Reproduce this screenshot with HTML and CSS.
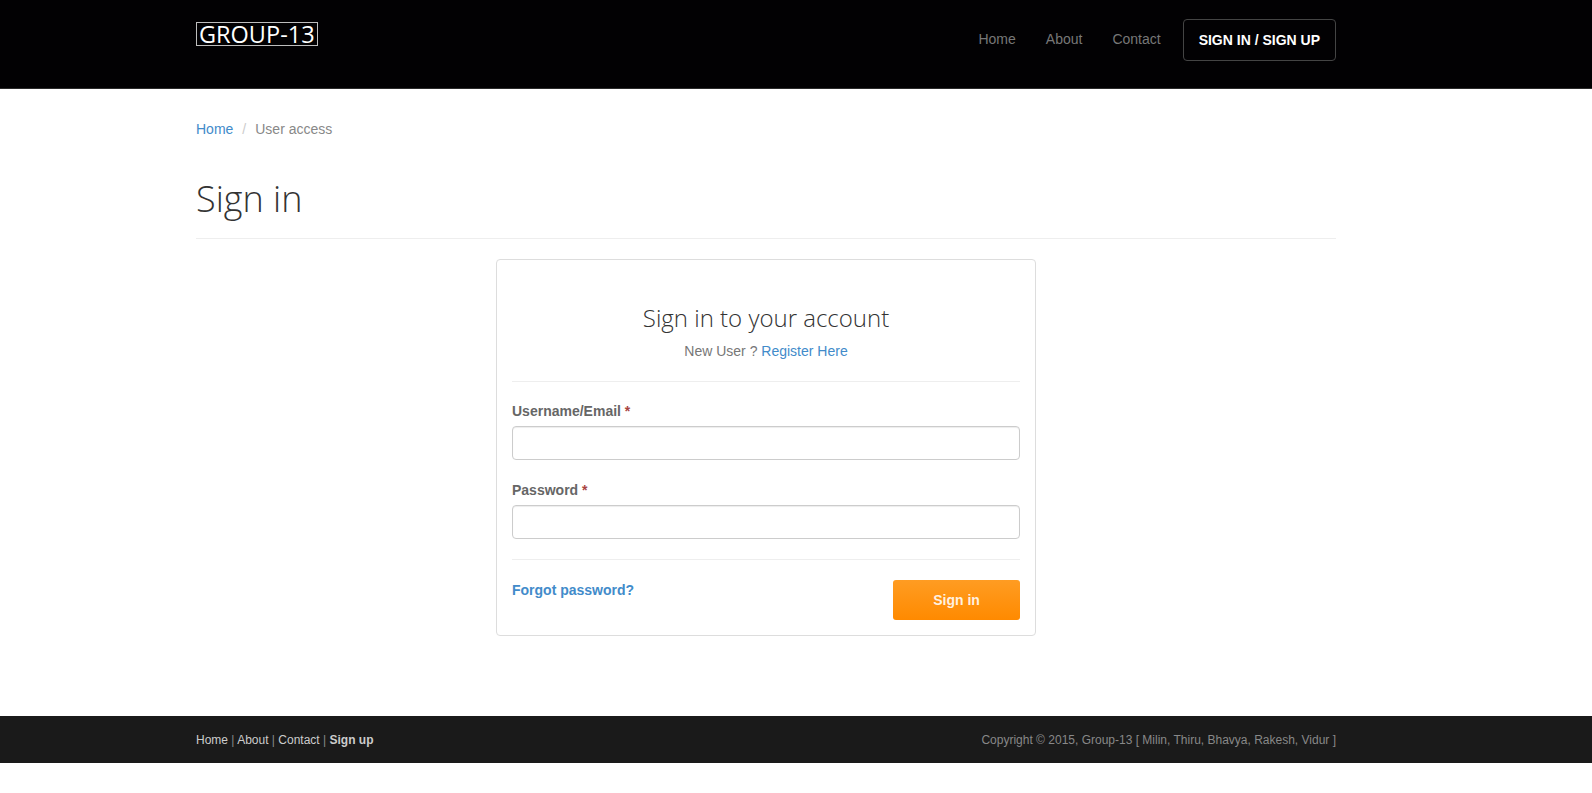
FILE: index.html
```html
<!DOCTYPE html>
<html lang="en">
<head>
<meta charset="utf-8">
<title>Sign in - Group-13</title>
<link rel="stylesheet" href="styles.css">
</head>
<body>
<header class="topbar">
  <div class="container topbar-inner">
    <a class="logo" href="#">GROUP-13</a>
    <nav class="nav">
      <a class="nav-link" href="#">Home</a>
      <a class="nav-link" href="#">About</a>
      <a class="nav-link" href="#">Contact</a>
      <a class="nav-btn" href="#">SIGN IN / SIGN UP</a>
    </nav>
  </div>
</header>

<main class="container main">
  <ol class="breadcrumb">
    <li><a href="#">Home</a></li>
    <li class="sep">/</li>
    <li class="active">User access</li>
  </ol>
  <h1 class="page-title">Sign in</h1>
  <hr class="page-rule">

  <section class="card">
    <div class="card-head">
      <h2 class="card-title">Sign in to your account</h2>
      <p class="card-sub">New User ? <a href="#">Register Here</a></p>
    </div>
    <hr class="card-rule">
    <form class="form">
      <div class="field">
        <label class="label">Username/Email <span class="req">*</span></label>
        <input class="input" type="text">
      </div>
      <div class="field field-2">
        <label class="label">Password <span class="req">*</span></label>
        <input class="input" type="password">
      </div>
      <hr class="card-rule rule-2">
      <div class="actions">
        <a class="forgot" href="#">Forgot password?</a>
        <button class="btn-signin" type="button">Sign in</button>
      </div>
    </form>
  </section>
</main>

<footer class="footer">
  <div class="container footer-inner">
    <div class="footer-links">
      <a href="#">Home</a> <span class="bar">|</span> <a href="#">About</a> <span class="bar">|</span> <a href="#">Contact</a> <span class="bar">|</span> <a class="strong" href="#">Sign up</a>
    </div>
    <div class="copyright">Copyright © 2015, Group-13 [ Milin, Thiru, Bhavya, Rakesh, Vidur ]</div>
  </div>
</footer>
</body>
</html>
```
FILE: styles.css
```css
* { box-sizing: border-box; }
html, body { margin: 0; padding: 0; }
body {
  background: #fff;
  font-family: "Liberation Sans", Arial, sans-serif;
  font-size: 14px;
  line-height: 20px;
  color: #333;
}
a { text-decoration: none; }

.container {
  width: 1140px;
  margin-left: 196px;
}

/* header */
.topbar {
  background: #020103;
  height: 89px;
  border-bottom: 1px solid #2b2b2b;
}
.topbar-inner {
  display: flex;
  justify-content: space-between;
  align-items: flex-start;
}
.logo {
  margin-top: 22px;
  display: block;
  font-family: "Open Sans", sans-serif;
  font-size: 23.5px;
  line-height: 22px;
  color: #fff;
  border: 1px solid #bdbdbd;
  padding: 0 2px 0 2px;
}
.nav {
  display: flex;
  align-items: center;
  margin-top: 19px;
}
.nav-link {
  color: #777;
  font-size: 14px;
  padding: 0 15px;
  line-height: 40px;
  margin-bottom: 2px;
}
.nav-btn {
  margin-left: 7px;
  display: block;
  height: 42px;
  line-height: 40px;
  padding: 0 15px;
  border: 1px solid #444;
  border-radius: 4px;
  color: #fff;
  font-weight: bold;
  font-size: 14px;
}

/* main */
.main { padding-top: 30px; }
.breadcrumb {
  list-style: none;
  margin: 0;
  padding: 0;
  display: flex;
  font-size: 14px;
  line-height: 20px;
}
.breadcrumb a { color: #428bca; }
.breadcrumb .sep { color: #ccc; padding: 0 9px; }
.breadcrumb .active { color: #888; }

.page-title {
  margin: 40px 0 0;
  font-family: "Open Sans", sans-serif;
  font-weight: 300;
  font-size: 36px;
  line-height: 40px;
  color: #333;
}
.page-rule {
  margin: 19px 0 0;
  border: 0;
  border-top: 1px solid #eee;
}

.card {
  width: 540px;
  margin: 20px auto 0;
  border: 1px solid #ddd;
  border-radius: 4px;
  padding: 15px;
}
.card-head { text-align: center; padding-top: 29px; }
.card-title {
  margin: 0;
  font-family: "Open Sans", sans-serif;
  font-weight: 300;
  font-size: 24px;
  line-height: 27px;
  color: #333;
}
.card-sub {
  margin: 10px 0 0;
  color: #777;
}
.card-sub a { color: #428bca; }
.card-rule {
  margin: 20px 0 0;
  border: 0;
  border-top: 1px solid #eee;
}

.field { margin-top: 19px; }
.field-2 { margin-top: 20px; }
.label {
  display: block;
  font-weight: bold;
  color: #666;
  margin-bottom: 5px;
}
.req { color: #a94442; }
.input {
  display: block;
  width: 100%;
  height: 34px;
  border: 1px solid #ccc;
  border-radius: 4px;
  box-shadow: inset 0 1px 1px rgba(0,0,0,.075);
  padding: 6px 12px;
  font-size: 14px;
}
.rule-2 { margin-top: 20px; }

.actions {
  margin-top: 20px;
  display: flex;
  justify-content: space-between;
  align-items: flex-start;
}
.forgot {
  color: #428bca;
  font-weight: bold;
  line-height: 20px;
}
.btn-signin {
  width: 127px;
  height: 40px;
  border: 0;
  border-radius: 3px;
  background: linear-gradient(#ff9c22, #ff8a00);
  color: rgba(255,255,255,.88);
  font-family: "Liberation Sans", Arial, sans-serif;
  font-weight: bold;
  font-size: 14px;
}

/* footer */
.footer {
  margin-top: 80px;
  margin-bottom: 31px;
  background: #1a1a1a;
  height: 47px;
  font-size: 12px;
}
.footer-inner {
  height: 47px;
  display: flex;
  justify-content: space-between;
  align-items: center;
}
.footer-links { color: #888; }
.footer-links a { color: #ccc; }
.footer-links .strong { font-weight: bold; }
.copyright { color: #888; }
```
